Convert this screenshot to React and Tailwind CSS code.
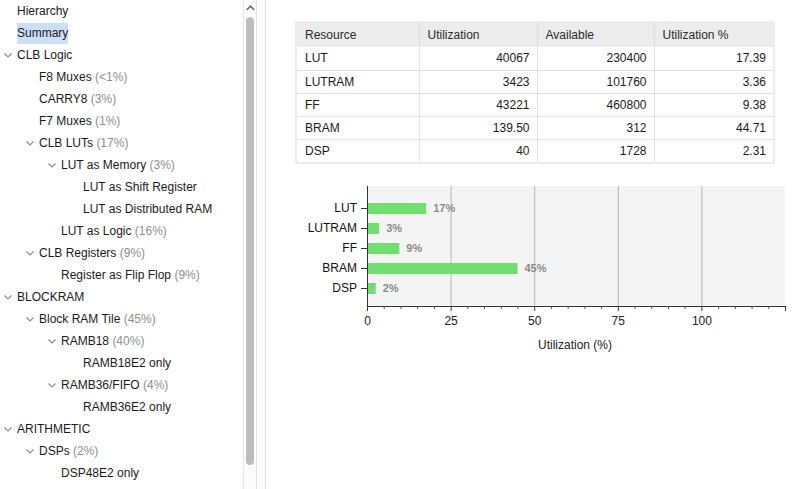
import React from "react";

const tree = [
  { label: "Hierarchy", level: 0 },
  { label: "Summary", level: 0, selected: true },
  { label: "CLB Logic", level: 0, open: true },
  { label: "F8 Muxes", pct: "(<1%)", level: 1 },
  { label: "CARRY8", pct: "(3%)", level: 1 },
  { label: "F7 Muxes", pct: "(1%)", level: 1 },
  { label: "CLB LUTs", pct: "(17%)", level: 1, open: true },
  { label: "LUT as Memory", pct: "(3%)", level: 2, open: true },
  { label: "LUT as Shift Register", level: 3 },
  { label: "LUT as Distributed RAM", level: 3 },
  { label: "LUT as Logic", pct: "(16%)", level: 2 },
  { label: "CLB Registers", pct: "(9%)", level: 1, open: true },
  { label: "Register as Flip Flop", pct: "(9%)", level: 2 },
  { label: "BLOCKRAM", level: 0, open: true },
  { label: "Block RAM Tile", pct: "(45%)", level: 1, open: true },
  { label: "RAMB18", pct: "(40%)", level: 2, open: true },
  { label: "RAMB18E2 only", level: 3 },
  { label: "RAMB36/FIFO", pct: "(4%)", level: 2, open: true },
  { label: "RAMB36E2 only", level: 3 },
  { label: "ARITHMETIC", level: 0, open: true },
  { label: "DSPs", pct: "(2%)", level: 1, open: true },
  { label: "DSP48E2 only", level: 2 },
];

const rows = [
  { name: "LUT", used: "40067", avail: "230400", pct: "17.39", v: 17.39, lbl: "17%" },
  { name: "LUTRAM", used: "3423", avail: "101760", pct: "3.36", v: 3.36, lbl: "3%" },
  { name: "FF", used: "43221", avail: "460800", pct: "9.38", v: 9.38, lbl: "9%" },
  { name: "BRAM", used: "139.50", avail: "312", pct: "44.71", v: 44.71, lbl: "45%" },
  { name: "DSP", used: "40", avail: "1728", pct: "2.31", v: 2.31, lbl: "2%" },
];

const indent = ["pl-[4px]", "pl-[26px]", "pl-[48px]", "pl-[70px]"];

function Chevron() {
  return (
    <svg width="8" height="5" viewBox="0 0 8 5" className="block">
      <path d="M0.5 0.5 L4 4 L7.5 0.5" fill="none" stroke="#8a8a8a" strokeWidth="1.1" />
    </svg>
  );
}

function TreeRow({ item }) {
  return (
    <div className={`flex items-center h-[22px] ${indent[item.level]}`}>
      <span className="w-[8px] mr-[5px] flex items-center">{item.open && <Chevron />}</span>
      <span
        className={`whitespace-nowrap leading-[21px] ${item.selected ? "bg-[#cddff6]" : ""}`}
      >
        {item.label}
        {item.pct && <span className="text-[#8e8e8e]"> {item.pct}</span>}
      </span>
    </div>
  );
}

function Chart() {
  const x0 = 101;
  const x1 = 519;
  const top = 12;
  const bottom = 132;
  const k = (x1 - x0) / 125;
  const centers = [34, 54, 74, 94, 114];
  const minor = [];
  for (let u = 5; u < 125; u += 5) if (u % 25 !== 0) minor.push(u);
  return (
    <svg width="539" height="185" className="block" style={{ fontFamily: "'Liberation Sans', Arial, sans-serif" }}>
      <rect x={x0} y={top} width={x1 - x0} height={bottom - top} fill="#f4f4f4" />
      {[25, 50, 75, 100].map((u) => (
        <line key={u} x1={x0 + u * k + 0.5} x2={x0 + u * k + 0.5} y1={top} y2={bottom} stroke="#b4b4b4" />
      ))}
      {rows.map((r, i) => (
        <g key={r.name}>
          <rect x={x0 + 1} y={centers[i] - 5} width={r.v * k} height="11" fill="#6fe06f" />
          <text x={x0 + r.v * k + 8} y={centers[i] + 4} fontSize="11" fontWeight="bold" fill="#8a8a8a">
            {r.lbl}
          </text>
          <line x1={x0 - 6} x2={x0} y1={centers[i] + 0.5} y2={centers[i] + 0.5} stroke="#333" />
          <text x={x0 - 10} y={centers[i] + 4} fontSize="12" textAnchor="end" fill="#111">
            {r.name}
          </text>
        </g>
      ))}
      <line x1={x0 + 0.5} x2={x0 + 0.5} y1={top} y2={bottom} stroke="#333" />
      <line x1={x0} x2={x1} y1={bottom + 0.5} y2={bottom + 0.5} stroke="#333" />
      {[0, 25, 50, 75, 100, 125].map((u) => (
        <line key={u} x1={x0 + u * k + 0.5} x2={x0 + u * k + 0.5} y1={bottom} y2={bottom + 5} stroke="#333" />
      ))}
      {minor.map((u) => (
        <line key={u} x1={x0 + u * k + 0.5} x2={x0 + u * k + 0.5} y1={bottom} y2={bottom + 3} stroke="#555" />
      ))}
      {[0, 25, 50, 75, 100].map((u) => (
        <text key={u} x={x0 + u * k + 0.5} y="151" fontSize="12" textAnchor="middle" fill="#222">
          {u}
        </text>
      ))}
      <text x="309" y="175" fontSize="12" textAnchor="middle" fill="#222">
        Utilization (%)
      </text>
    </svg>
  );
}

export default function App() {
  return (
    <div
      className="w-[805px] h-[489px] bg-white flex overflow-hidden text-[12px] text-[#1a1a1a]"
      style={{ fontFamily: "'Liberation Sans', Arial, sans-serif" }}
    >
      {/* Tree */}
      <div className="w-[243px] shrink-0">
        {tree.map((item) => (
          <TreeRow key={item.label} item={item} />
        ))}
      </div>

      {/* Scrollbar */}
      <div className="w-[14px] shrink-0 border-x border-[#e4e4e4] bg-[#fbfbfb] flex flex-col items-center">
        <svg width="9" height="6" viewBox="0 0 9 6" className="mt-[5px]">
          <path d="M0.7 5 L4.5 1.2 L8.3 5" fill="none" stroke="#6a6a6a" strokeWidth="1.6" />
        </svg>
        <div className="w-[8px] h-[448px] mt-[6px] rounded-[4px] bg-[#bdbdbd]" />
      </div>

      <div className="w-[8px] shrink-0 bg-[#fbfbfb]" />

      {/* Right panel */}
      <div className="flex-1 border-l border-[#e2e2e2] flex flex-col">
        <div className="ml-[29px] mt-[21px] w-[480px] bg-[#ececec] p-[2px]">
          <table className="w-full border-collapse table-fixed text-[12px]">
            <colgroup>
              <col className="w-[122px]" />
              <col className="w-[118px]" />
              <col className="w-[117px]" />
              <col className="w-[119px]" />
            </colgroup>
            <thead>
              <tr className="h-[24px] text-[#2a2a2a]">
                <th className="font-normal text-left pl-[8px] border-r border-[#dcdcdc]">Resource</th>
                <th className="font-normal text-left pl-[8px] border-r border-[#dcdcdc]">Utilization</th>
                <th className="font-normal text-left pl-[8px] border-r border-[#dcdcdc]">Available</th>
                <th className="font-normal text-left pl-[8px]">Utilization %</th>
              </tr>
            </thead>
            <tbody className="bg-white">
              {rows.map((r, i) => (
                <tr key={r.name} className={`h-[23px] ${i > 0 ? "border-t border-[#e2e2e2]" : ""}`}>
                  <td className="pl-[8px] border-r border-[#e2e2e2]">{r.name}</td>
                  <td className="text-right pr-[7px] border-r border-[#e2e2e2]">{r.used}</td>
                  <td className="text-right pr-[7px] border-r border-[#e2e2e2]">{r.avail}</td>
                  <td className="text-right pr-[7px]">{r.pct}</td>
                </tr>
              ))}
            </tbody>
          </table>
        </div>
        <div className="mt-[10px]">
          <Chart />
        </div>
      </div>
    </div>
  );
}
